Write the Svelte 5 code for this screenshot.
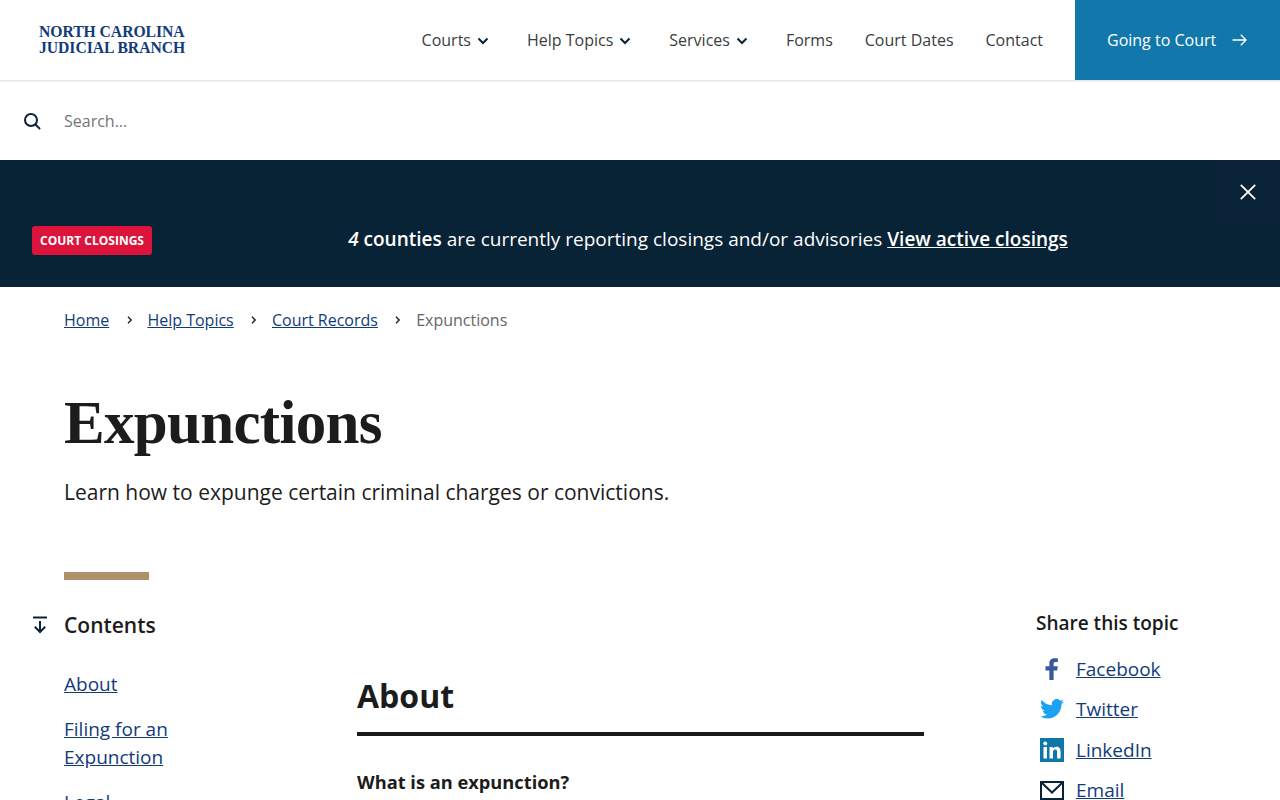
<script>
  const nav = [
    { label: 'Courts', caret: true },
    { label: 'Help Topics', caret: true },
    { label: 'Services', caret: true },
    { label: 'Forms' },
    { label: 'Court Dates' },
    { label: 'Contact' }
  ];
</script>

<div class="page">
  <header class="top">
    <a class="logo" href="#home">NORTH CAROLINA<br />JUDICIAL BRANCH</a>
    <nav class="nav">
      {#each nav as item}
        <a href="#nav" class="nav-item">
          {item.label}
          {#if item.caret}
            <svg class="caret" width="12" height="8" viewBox="0 0 12 8"><path d="M1.500 1.500 6 6l4.500-4.500" fill="none" stroke="#0a2338" stroke-width="2"/></svg>
          {/if}
        </a>
      {/each}
    </nav>
    <a class="cta" href="#going">
      Going to Court
      <svg width="15" height="12" viewBox="0 0 15 12"><path d="M0.500 6H14M8.800 0.800 14 6l-5.200 5.200" fill="none" stroke="#fff" stroke-width="1.300"/></svg>
    </a>
  </header>

  <div class="search">
    <svg width="18" height="18" viewBox="0 0 18 18"><circle cx="8" cy="8" r="6" fill="none" stroke="#0a2338" stroke-width="2"/><path d="m12.500 12.500 4 4" stroke="#0a2338" stroke-width="2" stroke-linecap="round"/></svg>
    <span class="placeholder">Search...</span>
  </div>

  <section class="banner">
    <span class="badge">COURT CLOSINGS</span>
    <p class="notice"><b><i>4</i> counties</b> are currently reporting closings and/or advisories <a href="#closings">View active closings</a></p>
    <button class="close" aria-label="Close">
      <svg width="16" height="16" viewBox="0 0 16 16"><path d="M0.800 0.800 15.200 15.200M15.200 0.800 0.800 15.200" stroke="#fff" stroke-width="1.800"/></svg>
    </button>
  </section>

  <nav class="crumbs">
    <a href="#home">Home</a>
    <svg class="sep" width="6" height="8" viewBox="0 0 6 8"><path d="M1 .8 4.200 4 1 7.200" fill="none" stroke="#0a2338" stroke-width="1.400"/></svg>
    <a href="#help">Help Topics</a>
    <svg class="sep" width="6" height="8" viewBox="0 0 6 8"><path d="M1 .8 4.200 4 1 7.200" fill="none" stroke="#0a2338" stroke-width="1.400"/></svg>
    <a href="#records">Court Records</a>
    <svg class="sep" width="6" height="8" viewBox="0 0 6 8"><path d="M1 .8 4.200 4 1 7.200" fill="none" stroke="#0a2338" stroke-width="1.400"/></svg>
    <span class="current">Expunctions</span>
  </nav>

  <div class="hero">
    <h1>Expunctions</h1>
    <p class="lede">Learn how to expunge certain criminal charges or convictions.</p>
    <div class="rule"></div>
  </div>

  <div class="columns">
    <aside class="toc">
      <div class="toc-head">
        <svg class="toc-icon" width="16" height="18" viewBox="0 0 16 18"><path d="M1 1.500h14M8 5v11M2.800 10.800 8 16l5.200-5.200" fill="none" stroke="#0a2338" stroke-width="2"/></svg>
        <h2>Contents</h2>
      </div>
      <ul>
        <li><a href="#about">About</a></li>
        <li><a href="#filing">Filing for an Expunction</a></li>
        <li><a href="#legal">Legal</a></li>
      </ul>
    </aside>

    <main class="main">
      <h2 class="section">About</h2>
      <h3>What is an expunction?</h3>
    </main>

    <aside class="share">
      <h2>Share this topic</h2>
      <a href="#fb" class="share-row">
        <span class="share-icon"><svg width="14" height="22" viewBox="0 0 14.500 24" preserveAspectRatio="none"><path d="M4.500 24V13.500H.5V9h4V6c0-3.700 2.200-5.700 5.500-5.700 1.600 0 2.900.1 3.300.2v3.900h-2.300c-1.800 0-2.100.9-2.100 2.100V9h4.300l-.6 4.500H8.900V24z" fill="#3b5998"/></svg></span>
        Facebook
      </a>
      <a href="#tw" class="share-row">
        <span class="share-icon"><svg width="24" height="20" viewBox="0 0 24 20"><path d="M24 2.400c-.9.400-1.800.7-2.800.8 1-.6 1.800-1.600 2.200-2.700-1 .6-2 1-3.100 1.200A4.900 4.900 0 0 0 11.900 6.200C7.800 6 4.200 4 1.700.9c-.4.700-.7 1.600-.7 2.500 0 1.700.9 3.200 2.200 4.100-.8 0-1.600-.2-2.200-.6v.1c0 2.400 1.700 4.400 3.900 4.800-.7.200-1.500.2-2.200.1.600 1.900 2.400 3.400 4.600 3.400A9.900 9.900 0 0 1 0 17.300 13.900 13.900 0 0 0 7.500 19.500c9.100 0 14-7.500 14-14v-.6c1-.7 1.800-1.600 2.500-2.500z" fill="#1da1f2"/></svg></span>
        Twitter
      </a>
      <a href="#li" class="share-row">
        <span class="share-icon"><svg width="24" height="24" viewBox="0 0 24 24"><rect width="24" height="24" fill="#0e76a8"/><rect x="3.500" y="9" width="3.500" height="11.500" fill="#fff"/><circle cx="5.250" cy="5.500" r="2" fill="#fff"/><path d="M9.500 9h3.300v1.600c.6-1 1.800-1.900 3.600-1.900 3.500 0 4.200 2.300 4.200 5.300v6.500h-3.500v-5.800c0-1.400 0-3.100-1.900-3.100s-2.200 1.500-2.200 3v5.900H9.500z" fill="#fff"/></svg></span>
        LinkedIn
      </a>
      <a href="#em" class="share-row">
        <span class="share-icon"><svg width="24" height="19" viewBox="0 0 24 19"><rect x="1" y="1" width="22" height="17" fill="none" stroke="#0a2338" stroke-width="2"/><path d="m1.500 1.500 10.500 10 10.500-10" fill="none" stroke="#0a2338" stroke-width="2"/></svg></span>
        Email
      </a>
    </aside>
  </div>
</div>

<style>
  :global(body) { margin: 0; background: #fff; }
  .page { height: 800px; overflow: hidden; font-family: "Open Sans", sans-serif; color: #1a1a1a; font-size: 16px; }
  a { color: #123b7a; }

  .top { display: flex; align-items: stretch; height: 80px; box-shadow: 0 1px 2px rgba(0,0,0,.15); position: relative; }
  .logo { align-self: center; margin-left: 39px; font-family: "Liberation Serif", serif; font-weight: 700; font-size: 15.700px; line-height: 16px; color: #123b7a; text-decoration: none; letter-spacing: -.05px; }
  .nav { display: flex; align-items: center; margin-left: auto; gap: 32px; padding-right: 32px; }
  .nav-item { display: flex; align-items: center; gap: 6px; color: #3c3c3c; text-decoration: none; line-height: 24px; }
  .caret { margin: 1px 6px 0 0; }
  .cta { display: flex; align-items: center; gap: 16px; width: 205px; box-sizing: border-box; padding-left: 32px; background: #1277ab; color: #fff; text-decoration: none; }

  .search { display: flex; align-items: center; gap: 23px; height: 80px; padding: 2px 0 0 23px; box-sizing: border-box; }
  .placeholder { color: #757575; }

  .banner { position: relative; display: flex; align-items: center; height: 127px; padding: 34px 32px 0; box-sizing: border-box; background: #082236; color: #fff; font-size: 19px; }
  .badge { flex: none; width: 120px; height: 29px; display: flex; align-items: center; justify-content: center; border-radius: 3px; background: #dc143c; color: #fff; font-size: 12px; font-weight: 700; }
  .notice { flex: 1; margin: 0 0 4px; text-align: center; padding-left: 16px; }
  .notice b { font-weight: 600; }
  .notice a { color: #fff; font-weight: 600; }
  .close { position: absolute; top: 0; right: 0; width: 64px; height: 64px; padding: 0; display: flex; align-items: center; justify-content: center; background: #0a2338; border: 0; }

  .crumbs { display: flex; align-items: center; padding: 21px 64px 0; line-height: 24px; }
  .sep { margin: 0 14.700px 0 17.500px; }
  .current { color: #666; }

  .hero { padding: 0 64px; }
  h1 { margin: 55px 0 0; font-family: "Liberation Serif", serif; font-weight: 700; font-size: 61px; line-height: 72px; color: #1c1c1c; letter-spacing: -.7px; }
  .lede { margin: 17px 0 0; font-size: 21px; line-height: 32px; color: #1c1c1c; }
  .rule { width: 85px; height: 8px; margin-top: 64px; background: #ae9269; }

  .columns { display: grid; grid-template-columns: 293px 567px 1fr; column-gap: 0; padding-left: 64px; margin-top: 29px; }
  .toc-head { position: relative; }
  .toc-icon { position: absolute; left: -32px; top: 7px; }
  .toc h2 { margin: 0; font-size: 21px; line-height: 32px; font-weight: 600; color: #1c1c1c; }
  .toc ul { list-style: none; margin: 29px 0 0; padding: 0; width: 150px; font-size: 19px; line-height: 28px; }
  .toc li { margin-bottom: 17px; }

  .main { padding-top: 67px; }
  .section { margin: 0; padding-bottom: 16px; border-bottom: 4px solid #1a1a1a; font-size: 32px; line-height: 40px; font-weight: 700; color: #1c1c1c; }
  h3 { margin: 32px 0 0; font-size: 18.250px; line-height: 28px; font-weight: 700; color: #1c1c1c; }

  .share { margin-left: 112px; }
  .share h2 { margin: 0 0 12px; font-size: 19px; line-height: 28px; font-weight: 600; }
  .share-row { display: flex; align-items: center; gap: 12px; height: 40.300px; font-size: 19px; margin-left: 4px; }
  .share-icon { width: 24px; height: 24px; display: flex; align-items: center; justify-content: center; flex: none; }
</style>
